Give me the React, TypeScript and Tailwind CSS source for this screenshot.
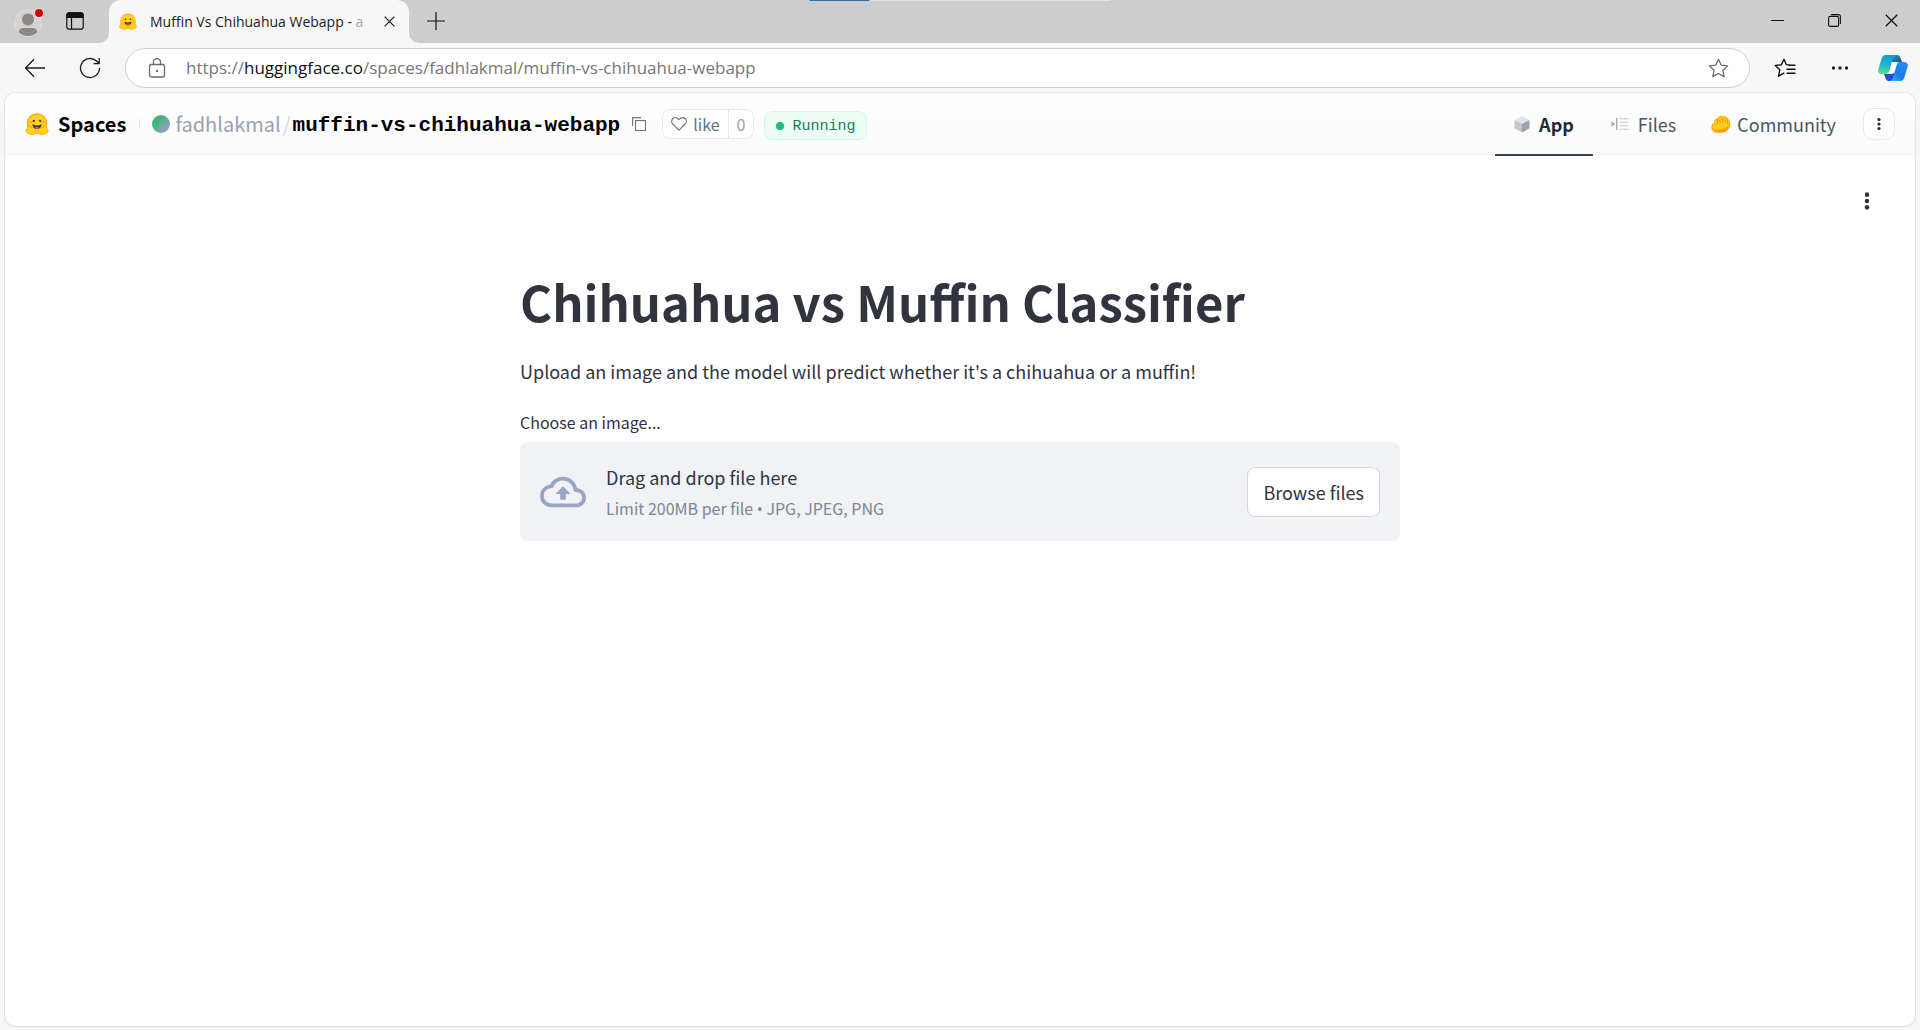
import { useRef, useState } from "react";

const SANS = "font-['Noto_Sans_CJK_SC',sans-serif]";
const UI = "font-['Open_Sans',sans-serif]";

function HuggingFace({ className }: { className: string }) {
  return (
    <svg viewBox="0 0 48 44" className={className} aria-hidden="true">
      <circle cx="24" cy="21" r="20.5" fill="#ff9d0b" />
      <circle cx="24" cy="21" r="18.6" fill="#ffd21e" />
      <path d="M16 14.5c1.700-1.600 4-.8 4.300 1.400.2 1.300-.8.900-1.700.900-1.200 0-1.300 1.900-2.500 1.300-1.500-.8-1.400-2.600-.1-3.600ZM32 14.500c-1.700-1.600-4-.8-4.300 1.400-.2 1.300.8.900 1.700.9 1.200 0 1.300 1.900 2.500 1.300 1.500-.8 1.400-2.600.1-3.600Z" fill="#3a3b45" />
      <path d="M15.500 22c2.500 2 5.500 2.800 8.500 2.800s6-.8 8.500-2.800c1 0 .8 10-8.500 10s-9.500-10-8.500-10Z" fill="#3a3b45" />
      <path d="M19 29.500c1.600-3 8.400-3 10 0-1.300 1.700-3 2.500-5 2.500s-3.700-.8-5-2.500Z" fill="#f94040" />
      <circle cx="37" cy="18" r="1.900" fill="#ff9d0b" />
      <circle cx="11" cy="18" r="1.900" fill="#ff9d0b" />
      <path
        d="M10 25c-2-1-3.500.8-2.800 3-2-.3-3.200 1-2.500 3-2 .2-2.800 1.700-1.800 3.400-1.500.8-1.800 2.300-.7 3.600C5 41 11 43.500 16 43c5.500-.6 7-6 3.500-9.800l-3-4c-1.500-2-4-1.400-3.500 1.200L10 25Z"
        fill="#ffd21e" stroke="#ff9d0b" strokeWidth="1.6" strokeLinejoin="round"
      />
      <path
        d="M38 25c2-1 3.500.8 2.800 3 2-.3 3.200 1 2.500 3 2 .2 2.800 1.700 1.800 3.400 1.500.8 1.800 2.300.7 3.600C43 41 37 43.500 32 43c-5.500-.6-7-6-3.500-9.800l3-4c1.500-2 4-1.400 3.500 1.200L38 25Z"
        fill="#ffd21e" stroke="#ff9d0b" strokeWidth="1.6" strokeLinejoin="round"
      />
    </svg>
  );
}

function Profile() {
  return (
    <svg viewBox="0 0 32 32" className="size-8" aria-hidden="true">
      <defs>
        <clipPath id="avatar"><circle cx="15" cy="18" r="13" /></clipPath>
      </defs>
      <circle cx="15" cy="18" r="13.500" fill="#d5d3d1" stroke="#dedede" />
      <g clipPath="url(#avatar)" fill="#8b8987">
        <circle cx="15" cy="14.500" r="6" />
        <path d="M4.500 31c0-5 3-8 6-8h9c3 0 6 3 6 8Z" />
      </g>
      <circle cx="26" cy="8" r="5" fill="#e3e3e3" />
      <circle cx="26" cy="8" r="4" fill="#d90007" />
    </svg>
  );
}

function TabActions() {
  return (
    <svg viewBox="0 0 18 18" className="size-[18px]" fill="none" stroke="#111" strokeWidth="1.200" aria-hidden="true">
      <rect x=".8" y=".8" width="16.400" height="16.400" rx="2.500" />
      <path d="M1 3.200Q1 .8 3.300.8h11.400Q17 .8 17 3.200V5.400H1Z" fill="#111" />
      <path d="M5.500 5v12" />
    </svg>
  );
}

function CloseIcon({ className }: { className: string }) {
  return (
    <svg viewBox="0 0 12 12" className={className} fill="none" stroke="#111" aria-hidden="true">
      <path d="m.7.7 10.600 10.600M11.300.7.7 11.300" strokeWidth="1.200" />
    </svg>
  );
}

function Copilot() {
  return (
    <svg viewBox="0 0 30 28" className="h-7 w-[30px]" aria-hidden="true">
      <defs>
        <linearGradient id="leafLeft" x1=".3" y1="0" x2=".2" y2="1">
          <stop offset="0" stopColor="#149bd8" /><stop offset=".5" stopColor="#1fb3cd" /><stop offset="1" stopColor="#5fe089" />
        </linearGradient>
        <linearGradient id="leafRight" x1="1" y1="0" x2="0" y2="1">
          <stop offset="0" stopColor="#2a8df0" /><stop offset=".6" stopColor="#1b7cee" /><stop offset="1" stopColor="#2fc0f6" />
        </linearGradient>
        <linearGradient id="foldTop" x1="0" y1="0" x2="1" y2="1">
          <stop offset="0" stopColor="#12a5cf" /><stop offset="1" stopColor="#104a80" />
        </linearGradient>
      </defs>
      <path d="M13 8.500C14 3.500 15 1 18 1h1c2 0 3 1.200 3.500 3L24 8h-2c-2 0-3 .5-3.700 2Z" fill="url(#foldTop)" />
      <path d="M17 19.500C16 24.500 15 27 12 27h-1c-2 0-3-1.200-3.500-3L6 20h2c2 0 3-.5 3.700-2Z" fill="#1c50d8" />
      <path d="M12 8h8l-2.500 4L14.500 20H9l3-8Z" fill="#fff" />
      <path d="M8 1h10c-1.700.3-2.500 1.500-3 3.200l-3.600 12.600C10.700 19 9.500 20 7.400 20H4c-3 0-4.500-2-3.600-5L3.500 5C4.300 2.400 5.500 1 8 1Z" fill="url(#leafLeft)" />
      <path d="M22 27H12c1.700-.3 2.500-1.500 3-3.200l3.600-12.600C19.300 9 20.500 8 22.600 8H26c3 0 4.500 2 3.600 5l-3.100 10c-.8 2.600-2 4-4.500 4Z" fill="url(#leafRight)" />
    </svg>
  );
}

function AppCube() {
  return (
    <svg viewBox="0 0 16 18" className="h-[18px] w-4" aria-hidden="true">
      <path d="M8 1 15.500 5 8 9 .5 5Z" fill="#e0e3e8" />
      <path d="M.5 5 8 9v8.500L.5 13.200Z" fill="#c1c6cf" />
      <path d="M15.500 5 8 9v8.500l7.500-4.300Z" fill="#9aa1af" />
    </svg>
  );
}

function FilesIcon() {
  return (
    <svg viewBox="0 0 18 14" className="h-[14px] w-[18px]" aria-hidden="true">
      <path d="M.5 4.300 4 7 .5 9.700Z" fill="#9ca3af" />
      <path d="M5.800 1v12" stroke="#9ca3af" strokeWidth="1.300" />
      <path d="M8.500 1.700h9M8.500 5.200h9M8.500 8.700h9M8.500 12.200h9" stroke="#d5d9df" strokeWidth="1.500" />
    </svg>
  );
}

function ClapIcon() {
  return (
    <svg viewBox="0 0 20 18" className="h-[18px] w-5" aria-hidden="true">
      <path
        d="M1 13.500C.5 9.500 2.500 8.300 3.500 7.500c.2-1.500.3-3 1.700-3.300.8-.2 1.300.3 1.500 1C7 3 7.500 1.500 9 1.200c.9-.2 1.600.2 2 .8.900-1.200 2.600-1 3.200.3 1.500-.4 2.600.7 2.500 2.200 1.200.3 1.800 1.300 1.600 2.500.7 2 .6 4.300-.5 6.200-1.500 2.600-4.500 3.900-7.800 4.100-4.500.3-8.300-.3-9-3.800Z"
        fill="#ffcb1c" stroke="#ff9d0b" strokeWidth="1"
      />
      <path d="M9.500 7.500 7.500 4.500M12 6.500 10.500 2.500M14.500 7 13.500 3M16.500 8.500 16.300 5M6.800 5.500C6.500 7.500 7 8.500 5.500 9.500" fill="none" stroke="#f59300" strokeWidth=".9" strokeLinecap="round" />
      <path d="M1 13.200c2.500 2.200 6 2.200 9 1.400 3.200-.8 5.500-2.400 7.800-3.600-.6 3.800-4 5.900-7.500 6.200-4.500.3-8.600-.3-9.300-4Z" fill="#ff9d0b" />
    </svg>
  );
}

function Dots({ className, gap, r }: { className: string; gap: number; r: number }) {
  return (
    <svg viewBox="0 0 20 20" className={className} fill="currentColor" aria-hidden="true">
      <circle cx="10" cy={10 - gap} r={r} />
      <circle cx="10" cy="10" r={r} />
      <circle cx="10" cy={10 + gap} r={r} />
    </svg>
  );
}

function TitleBar() {
  return (
    <div className="relative flex h-[43px] bg-[#f7f7f7]">
      <div className="flex w-[109px] items-center gap-[21px] rounded-br-[10px] bg-[#cdcdcd] pb-[2px] pl-[13px]">
        <button aria-label="Profile"><Profile /></button>
        <button aria-label="Tab actions"><TabActions /></button>
      </div>
      <div className="w-[300px] bg-[#cdcdcd]">
        <div className="flex h-full items-center rounded-t-[12px] bg-[#f7f7f7] pr-[14px] pl-[10px]">
          <HuggingFace className="h-[17px] w-[18px]" />
          <span className="ml-[13px] flex-1 overflow-hidden text-[14px] leading-[20px] whitespace-nowrap text-[#1b1b1b]">
            Muffin Vs Chihuahua Webapp - <span className="text-[#a8a8a8]">a</span>
          </span>
          <button aria-label="Close tab"><CloseIcon className="size-[11px]" /></button>
        </div>
      </div>
      <div className="flex flex-1 items-center justify-between rounded-bl-[10px] bg-[#cdcdcd] pr-[22px] pb-[2px] pl-[18px]">
        <button aria-label="New tab">
          <svg viewBox="0 0 18 18" className="size-[18px]" stroke="#111" strokeWidth="1.200" aria-hidden="true">
            <path d="M9 0v18M0 9h18" />
          </svg>
        </button>
        <div className="flex items-center gap-[44px]">
          <button aria-label="Minimize">
            <svg viewBox="0 0 13 13" className="size-[13px]" stroke="#111" strokeWidth="1" aria-hidden="true"><path d="M0 6.500h13" /></svg>
          </button>
          <button aria-label="Restore">
            <svg viewBox="0 0 13 13" className="size-[13px]" fill="none" stroke="#111" strokeWidth="1.100" aria-hidden="true">
              <rect x=".6" y="2.400" width="10" height="10" rx="1.500" />
              <path d="M3 .6h7.400q2 0 2 2V10" />
            </svg>
          </button>
          <button aria-label="Close"><CloseIcon className="size-[13px]" /></button>
        </div>
      </div>
      <div className="absolute top-0 left-1/2 flex h-px w-[301px] -translate-x-1/2 bg-[#e3e3e3]">
        <div className="w-1/5 bg-[#2f6fa8]" />
      </div>
    </div>
  );
}

const STAR = "M10 1.200 12.600 6.700 18.700 7.500 14.200 11.700 15.400 17.700 10 14.700 4.600 17.700 5.800 11.700 1.300 7.500 7.400 6.700Z";

function Toolbar() {
  const [url, setUrl] = useState("https://huggingface.co/spaces/fadhlakmal/muffin-vs-chihuahua-webapp");
  const match = url.match(/^(https?:\/\/)?([^/]*)(.*)$/);
  return (
    <div className="flex h-[50px] items-center pr-[12px] pl-[24px]">
      <button aria-label="Back">
        <svg viewBox="0 0 22 20" className="h-5 w-[22px]" fill="none" stroke="#1b1b1b" strokeWidth="1.300" aria-hidden="true">
          <path d="M21 10H1.500M10 1.200 1.500 10l8.500 8.800" />
        </svg>
      </button>
      <button aria-label="Refresh" className="ml-[33px]">
        <svg viewBox="0 0 22 22" className="size-[22px]" fill="none" stroke="#1b1b1b" strokeWidth="1.300" aria-hidden="true">
          <path d="M20.500 11a9.500 9.500 0 1 1-2.800-6.700L20 6.500M20.200 1v5.700h-5.700" />
        </svg>
      </button>
      <div className="ml-[24px] flex h-[40px] flex-1 items-center rounded-full border border-[#cfcfcf] bg-white pr-[20px] pl-[22px]">
        <svg viewBox="0 0 18 20" className="h-5 w-[18px]" fill="none" stroke="#6b6b6b" strokeWidth="1.300" aria-hidden="true">
          <rect x="1.500" y="6.500" width="15" height="12.500" rx="2" />
          <path d="M5.500 6.500V4a3.500 3.500 0 0 1 7 0v2.500" />
          <circle cx="9" cy="13" r="1.200" fill="#6b6b6b" stroke="none" />
        </svg>
        <div className="relative ml-[20px] flex-1 text-[17px] leading-[24px]">
          <div aria-hidden="true" className="whitespace-pre text-[#767676]">
            {match?.[1]}<span className="text-[#111]">{match?.[2]}</span>{match?.[3]}
          </div>
          <input
            aria-label="Address"
            value={url}
            onChange={(e) => setUrl(e.target.value)}
            className="absolute inset-0 w-full bg-transparent text-transparent caret-black outline-none"
          />
        </div>
        <button aria-label="Add to favorites">
          <svg viewBox="0 0 20 20" className="size-[21px]" fill="none" stroke="#6b6b6b" strokeWidth="1.200" strokeLinejoin="round" aria-hidden="true"><path d={STAR} /></svg>
        </button>
      </div>
      <button aria-label="Favorites" className="ml-[24px]">
        <svg viewBox="0 0 22 20" className="h-5 w-[22px]" fill="none" stroke="#111" strokeWidth="1.400" strokeLinejoin="round" strokeLinecap="round" aria-hidden="true">
          <path d="M15.500 7 12.300 6.600 10 1.200 7.400 6.700 1.300 7.500l4.500 4.200-1.200 6.500 5.200-3M14.500 7.200h6.500M13 11.200h8M13 15.200h8" />
        </svg>
      </button>
      <button aria-label="Settings and more" className="ml-[34px] text-[#222]"><Dots className="size-5 rotate-90" gap={6.500} r={1.700} /></button>
      <button aria-label="Copilot" className="ml-[28px]"><Copilot /></button>
    </div>
  );
}

function SpaceHeader() {
  return (
    <header className="flex h-[62px] items-center border-b border-gray-100 bg-linear-to-b from-white to-[#f9fafb] pr-[20px] pl-[20px]">
      <a href="#spaces" className="flex items-center gap-[9px]">
        <HuggingFace className="h-[22px] w-[24px]" />
        <span className="text-[20px] leading-[28px] font-bold text-black">Spaces</span>
      </a>
      <span className="ml-[13px] h-[10px] w-px bg-gray-200" />
      <span className="ml-[12px] size-[18px] rounded-full bg-linear-to-br from-[#3fb57c] from-35% to-[#a78be8]" />
      <a href="#fadhlakmal" className="ml-[5px] text-[20px] leading-[28px] text-gray-400">fadhlakmal</a>
      <span className="mx-[2px] text-[20px] leading-[28px] text-gray-300">/</span>
      <a href="#space" className="pt-1 font-['Liberation_Mono',monospace] text-[21px] leading-[28px] font-bold text-black">muffin-vs-chihuahua-webapp</a>
      <button aria-label="Copy space name" className="ml-[12px]">
        <svg viewBox="0 0 14 14" className="size-[14px]" fill="none" stroke="#6b7280" strokeWidth="1.100" aria-hidden="true">
          <rect x="3.500" y="3.500" width="10" height="10" />
          <path d="M.6 9V.6H9" />
        </svg>
      </button>
      <div className="ml-[16px] flex h-[30px] items-center rounded-lg border border-gray-200 bg-white text-[16px] leading-[24px]">
        <button className="flex h-full items-center gap-[6px] border-r border-gray-200 px-[8px] text-gray-500">
          <svg viewBox="0 0 16 14" className="h-[14px] w-[16px]" fill="none" stroke="#6b7280" strokeWidth="1.100" aria-hidden="true">
            <path d="M8 13.200 1.800 7A3.700 3.700 0 0 1 7 1.700l1 1 1-1A3.700 3.700 0 0 1 14.200 7Z" strokeLinejoin="round" />
          </svg>
          like
        </button>
        <button className="px-[8px] text-gray-400">0</button>
      </div>
      <div className="mt-1 ml-[10px] flex h-[29px] items-center gap-[8px] rounded-lg border border-[#d3f8e4] bg-[#ecfdf5] px-[11px] font-['Liberation_Mono',monospace] text-[15px] leading-[20px] text-[#207a5f]">
        <span className="size-2 rounded-full bg-[#22b783]" />
        <span className="pt-0.5">Running</span>
      </div>
      <nav className="ml-auto flex self-stretch text-[18px] leading-[28px] text-gray-600">
        <a href="#app" className="-mb-0.5 flex items-center gap-[9px] border-b-2 border-gray-700 px-[19px] font-bold text-gray-800"><AppCube />App</a>
        <a href="#files" className="flex items-center gap-[9px] px-[18px]"><FilesIcon />Files</a>
        <a href="#community" className="flex items-center gap-[6px] pr-[18px] pl-[17px]"><ClapIcon />Community</a>
      </nav>
      <button aria-label="More options" className="ml-[9px] flex size-8 items-center justify-center rounded-[10px] border border-gray-200 bg-white text-gray-800">
        <Dots className="size-5" gap={4.500} r={1.600} />
      </button>
    </header>
  );
}

function Uploader() {
  const input = useRef<HTMLInputElement>(null);
  return (
    <main className="mx-auto w-full max-w-[880px] text-[#31333f]">
      <h1 className="text-[49px] leading-[60px] font-bold">Chihuahua vs Muffin Classifier</h1>
      <p className="mt-[24px] text-[18px] leading-[32px]">Upload an image and the model will predict whether it's a chihuahua or a muffin!</p>
      <label htmlFor="upload" className="mt-[22px] block text-[16px] leading-[26px]">Choose an image...</label>
      <section className="mt-[7px] flex h-[99px] items-center rounded-lg bg-[#f0f2f6] px-[20px]">
        <svg viewBox="0 0 24 24" className="w-[46px]" fill="#98a6c3" aria-hidden="true">
          <path d="M19.350 10.040A7.490 7.490 0 0 0 12 4C9.110 4 6.600 5.640 5.350 8.040A5.994 5.994 0 0 0 0 14c0 3.310 2.690 6 6 6h13c2.760 0 5-2.240 5-5 0-2.640-2.050-4.780-4.650-4.960zM19 18H6c-2.210 0-4-1.790-4-4 0-2.050 1.530-3.760 3.560-3.970l1.070-.11.500-.95A5.469 5.469 0 0 1 12 6c2.620 0 4.880 1.860 5.390 4.430l.300 1.500 1.530.110A2.980 2.980 0 0 1 22 15c0 1.650-1.350 3-3 3zM8 13h2.550v3h2.900v-3H16l-4-4z" />
        </svg>
        <div className="ml-[20px] flex-1 pt-0.5">
          <div className="text-[18px] leading-[32px]">Drag and drop file here</div>
          <div className="text-[16px] leading-[30px] text-[#808495]">
            Limit 200MB per file <span className="font-['Open_Sans',sans-serif]">•</span> JPG, JPEG, PNG
          </div>
        </div>
        <input ref={input} id="upload" type="file" accept=".jpg,.jpeg,.png" className="sr-only" />
        <button onClick={() => input.current?.click()} className="h-[50px] rounded-lg border border-[#d6d6d9] bg-white px-[15px] text-[18px] leading-[32px]">Browse files</button>
      </section>
    </main>
  );
}

export default function App() {
  return (
    <div className={`${UI} flex min-h-screen flex-col bg-[#f7f7f7]`}>
      <TitleBar />
      <Toolbar />
      <div className={`${SANS} mx-[5px] mb-[4px] flex flex-1 flex-col overflow-hidden rounded-[10px] bg-white shadow-[0_0_2px_rgba(0,0,0,0.3)]`}>
        <SpaceHeader />
        <div className="flex justify-end pt-[34px] pr-[36px]">
          <button aria-label="Main menu" className="text-[#31333f]"><Dots className="size-6" gap={5.300} r={1.900} /></button>
        </div>
        <div className="pt-[58px]"><Uploader /></div>
      </div>
    </div>
  );
}
